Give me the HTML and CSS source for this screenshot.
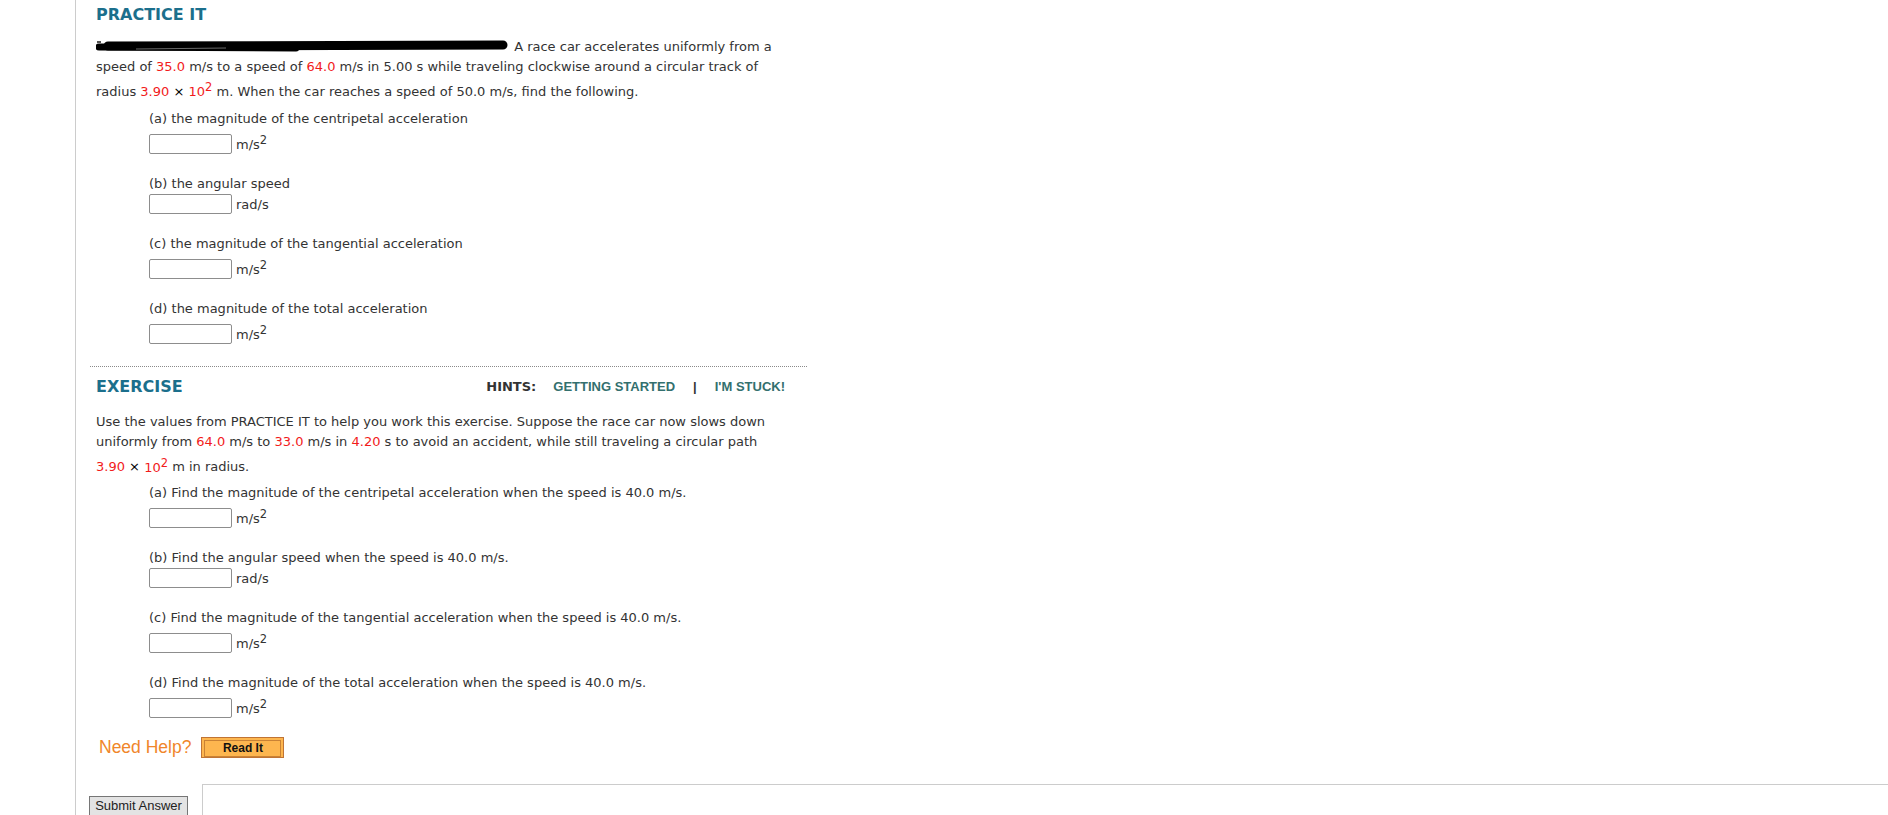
FILE: index.html
```html
<!DOCTYPE html>
<html>
<head>
<meta charset="utf-8">
<link rel="stylesheet" href="styles.css">
</head>
<body>
<div class="page">
  <div class="head">PRACTICE IT</div>
  <p class="intro"><svg class="blot" width="414" height="16" viewBox="0 0 414 16"><path d="M3 9 L200 10" stroke="#000" stroke-width="7" stroke-linecap="round" fill="none"/><path d="M12 8 L407 7" stroke="#000" stroke-width="9" stroke-linecap="round" fill="none"/><path d="M40 11 L130 10" stroke="#6a6a6a" stroke-width="1" fill="none"/><path d="M1 4 L5 4" stroke="#555" stroke-width="2" fill="none"/></svg> A race car accelerates uniformly from a speed of <span class="v">35.0</span> m/s to a speed of <span class="v">64.0</span> m/s in 5.00 s while traveling clockwise around a circular track of radius <span class="v">3.90</span> <span class="x">×</span> <span class="v">10<sup>2</sup></span> m. When the car reaches a speed of 50.0 m/s, find the following.</p>
  <div class="parts">
    <div class="part"><div class="q">(a) the magnitude of the centripetal acceleration</div><div class="ans sq"><input class="box" type="text"><span class="unit">m/s<sup>2</sup></span></div></div>
    <div class="part"><div class="q">(b) the angular speed</div><div class="ans"><input class="box" type="text"><span class="unit">rad/s</span></div></div>
    <div class="part"><div class="q">(c) the magnitude of the tangential acceleration</div><div class="ans sq"><input class="box" type="text"><span class="unit">m/s<sup>2</sup></span></div></div>
    <div class="part"><div class="q">(d) the magnitude of the total acceleration</div><div class="ans sq"><input class="box" type="text"><span class="unit">m/s<sup>2</sup></span></div></div>
  </div>
  <div class="divider"></div>
  <div class="exhead">
    <div class="head">EXERCISE</div>
    <div class="hints"><span class="hl">HINTS:</span><span class="hk">GETTING STARTED</span><span class="bar">|</span><span class="hk">I'M STUCK!</span></div>
  </div>
  <p class="intro ex">Use the values from PRACTICE IT to help you work this exercise. Suppose the race car now slows down uniformly from <span class="v">64.0</span> m/s to <span class="v">33.0</span> m/s in <span class="v">4.20</span> s to avoid an accident, while still traveling a circular path <span class="v">3.90</span> <span class="x">×</span> <span class="v">10<sup>2</sup></span> m in radius.</p>
  <div class="parts">
    <div class="part"><div class="q">(a) Find the magnitude of the centripetal acceleration when the speed is 40.0 m/s.</div><div class="ans sq"><input class="box" type="text"><span class="unit">m/s<sup>2</sup></span></div></div>
    <div class="part"><div class="q">(b) Find the angular speed when the speed is 40.0 m/s.</div><div class="ans"><input class="box" type="text"><span class="unit">rad/s</span></div></div>
    <div class="part"><div class="q">(c) Find the magnitude of the tangential acceleration when the speed is 40.0 m/s.</div><div class="ans sq"><input class="box" type="text"><span class="unit">m/s<sup>2</sup></span></div></div>
    <div class="part"><div class="q">(d) Find the magnitude of the total acceleration when the speed is 40.0 m/s.</div><div class="ans sq"><input class="box" type="text"><span class="unit">m/s<sup>2</sup></span></div></div>
  </div>
  <div class="help">
    <span class="need">Need Help?</span>
    <span class="readit"><span class="readin">Read It</span></span>
  </div>
  <div class="submitrow">
    <button class="submit" type="button">Submit Answer</button>
    <div class="notes"></div>
  </div>
</div>
</body>
</html>
```
FILE: styles.css
```css
html, body {
  margin: 0;
  padding: 0;
  background: #fff;
}
body {
  font-family: "DejaVu Sans", Verdana, sans-serif;
  font-size: 13px;
  line-height: 20px;
  color: #333;
  overflow: hidden;
}
.page {
  margin-left: 75px;
  border-left: 1px solid #cccccc;
  min-height: 815px;
  box-sizing: border-box;
  padding: 5px 0 0 14px;
}
.head {
  font-size: 16px;
  font-weight: bold;
  line-height: 20px;
  color: #1b6f8c;
  padding-left: 6px;
}
.intro {
  width: 690px;
  padding-left: 6px;
  margin: 12px 0 7px 0;
}
.intro.ex {
  margin-top: 15px;
  margin-bottom: 5px;
}
.blot {
  vertical-align: middle;
  margin-top: -4px;
}
.v {
  color: #f21b1b;
}
.x {
  color: #000;
}
sup {
  font-size: 11.5px;
  line-height: 20px;
}
.parts {
  padding-left: 59px;
}
.part {
  margin-bottom: 20px;
}
.ans {
  display: flex;
  align-items: center;
  gap: 4px;
  height: 20px;
}
.ans.sq {
  padding-top: 5px;
}
.unit {
  line-height: 20px;
  padding-top: 2px;
}
.unit sup {
  line-height: 0;
}
.box {
  width: 83px;
  height: 20px;
  box-sizing: border-box;
  border: 1px solid #8d8d8d;
  border-radius: 2px;
  margin: 0;
  padding: 0 3px;
  background: #fff;
}
.divider {
  width: 717px;
  border-top: 1px dotted #8a8a8a;
  margin-top: 22px;
}
.exhead {
  display: flex;
  justify-content: space-between;
  align-items: center;
  width: 695px;
  margin-top: 10px;
}
.hints {
  display: flex;
  align-items: center;
  gap: 17px;
  font-family: "Liberation Sans", Arial, sans-serif;
  font-weight: bold;
  font-size: 13px;
  color: #33706e;
}
.hl {
  font-family: "DejaVu Sans", Verdana, sans-serif;
  color: #333;
}
.bar {
  color: #333;
  margin: 0 1px;
}
.help {
  display: flex;
  align-items: center;
  gap: 10px;
  padding-left: 9px;
  margin-top: -1px;
}
.need {
  font-family: "Liberation Sans", Arial, sans-serif;
  font-size: 17.5px;
  color: #f0862a;
}
.readit {
  display: inline-block;
  width: 83px;
  height: 21px;
  box-sizing: border-box;
  border: 1px solid #c07434;
  background: #fdb64f;
  padding: 2px;
}
.readin {
  display: block;
  height: 15px;
  border: 1px solid #c98235;
  font-family: "Liberation Sans", Arial, sans-serif;
  font-weight: bold;
  font-size: 12px;
  line-height: 15px;
  text-align: center;
  color: #111;
}
.submitrow {
  display: flex;
  align-items: flex-start;
  gap: 14px;
  margin-top: 26px;
  margin-left: -1px;
}
.submit {
  margin-top: 12px;
  width: 99px;
  height: 20px;
  padding: 0;
  font-family: "Liberation Sans", Arial, sans-serif;
  font-size: 13px;
  color: #222;
  background: #e3e3e3;
  border: 1px solid #767676;
  border-radius: 0;
}
.notes {
  flex: 1;
  height: 120px;
  border: 1px solid #cccccc;
  border-right: 0;
}
```
